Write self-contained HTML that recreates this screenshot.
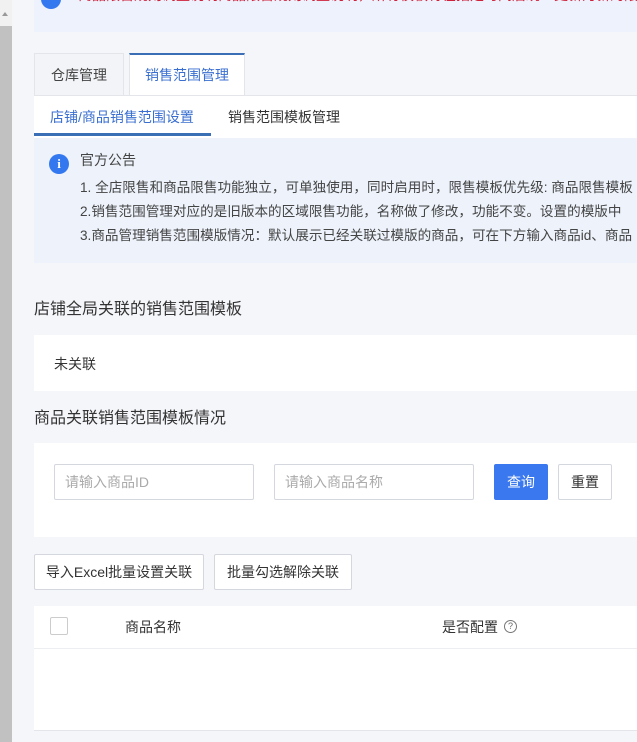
<!DOCTYPE html>
<html><head><meta charset="utf-8">
<style>
*{box-sizing:border-box;margin:0;padding:0}
body{width:637px;height:742px;overflow:hidden;background:#f5f6fa;font-family:"Liberation Sans","Noto Sans CJK SC",sans-serif;font-size:14px;color:#333;position:relative}
.abs{position:absolute}
.sb{left:0;top:0;width:12px;height:742px;background:#f1f1f1}
.sbt{left:0;top:26px;width:12px;height:716px;background:#c1c1c1}
.top{left:34px;top:0;width:603px;height:32px;background:#edf2fc;overflow:hidden}
.red{left:44px;top:-15px;white-space:nowrap;color:#d0203a;font-size:14px;line-height:20px}
.tab{top:53px;height:43px;line-height:42px;text-align:center;font-size:14px}
.line{left:34px;top:95px;width:603px;height:1px;background:#e3e5ea}
.notice{left:34px;top:138px;width:603px;height:125px;background:#edf2fb}
.ic{width:20px;height:20px;border-radius:50%;background:#3478f0;color:#fff;font-size:13px;font-weight:bold;text-align:center;line-height:20px;font-family:"Liberation Serif",serif}
.nt{left:80px;font-size:13.6px;color:#444;white-space:nowrap;line-height:20px}
.h{left:34px;font-size:16px;color:#333}
.box{left:34px;width:603px;background:#fff}
.inp{top:464px;width:200px;height:36px;border:1px solid #d4d7de;border-radius:2px;background:#fff;color:#aaa;padding-left:10px;line-height:34px;font-size:14px}
.btn{height:36px;border:1px solid #d4d7de;border-radius:2px;background:#fff;text-align:center;line-height:34px;font-size:14px;color:#333}
</style></head><body>
<div class="abs sb"></div><div class="abs sbt"></div>
<div class="abs" style="left:2px;top:12px;width:0;height:0;border-left:3px solid transparent;border-right:3px solid transparent;border-bottom:4px solid #999"></div>
<div class="abs top">
  <div class="abs ic" style="left:7px;top:-11px"></div>
  <div class="abs red">商品限售规则调整说明商品限售规则调整说明，所有模板将在指定时间后统一更新为新的限售模板规则说明商品限售</div>
</div>
<div class="abs tab" style="left:34px;width:90px;background:#f3f4f7;border:1px solid #e3e5ea;color:#444">仓库管理</div>
<div class="abs tab" style="left:129px;width:116px;background:#fff;border:1px solid #e3e5ea;border-top:2px solid #3a6fb5;border-bottom:none;color:#3a6fd0;height:44px;line-height:40px">销售范围管理</div>
<div class="abs line"></div>
<div class="abs" style="left:34px;top:96px;width:603px;height:42px;background:#fff"></div>
<div class="abs" style="left:50px;top:107px;color:#3a6fd0;font-size:14px">店铺/商品销售范围设置</div>
<div class="abs" style="left:228px;top:107px;color:#333;font-size:14px">销售范围模板管理</div>
<div class="abs" style="left:34px;top:133px;width:177px;height:3px;background:#3a6fb5"></div>
<div class="abs notice"></div>
<div class="abs ic" style="left:49px;top:154px">i</div>
<div class="abs nt" style="top:150px;font-size:14px">官方公告</div>
<div class="abs nt" style="top:178px">1. 全店限售和商品限售功能独立，可单独使用，同时启用时，限售模板优先级: 商品限售模板</div>
<div class="abs nt" style="top:202px">2.销售范围管理对应的是旧版本的区域限售功能，名称做了修改，功能不变。设置的模版中</div>
<div class="abs nt" style="top:226px">3.商品管理销售范围模版情况：默认展示已经关联过模版的商品，可在下方输入商品id、商品</div>
<div class="abs h" style="top:298px;margin-top:-3px">店铺全局关联的销售范围模板</div>
<div class="abs box" style="top:335px;height:56px"></div>
<div class="abs" style="left:54px;top:354px;font-size:14px">未关联</div>
<div class="abs h" style="top:404px">商品关联销售范围模板情况</div>
<div class="abs box" style="top:443px;height:94px"></div>
<div class="abs inp" style="left:54px">请输入商品ID</div>
<div class="abs inp" style="left:274px">请输入商品名称</div>
<div class="abs btn" style="left:494px;top:464px;width:54px;background:#3a78ef;border-color:#3a78ef;color:#fff">查询</div>
<div class="abs btn" style="left:558px;top:464px;width:54px">重置</div>
<div class="abs btn" style="left:34px;top:554px;width:170px">导入Excel批量设置关联</div>
<div class="abs btn" style="left:214px;top:554px;width:138px">批量勾选解除关联</div>
<div class="abs box" style="top:606px;height:125px"></div>
<div class="abs" style="left:34px;top:648px;width:603px;height:1px;background:#eceef2"></div>
<div class="abs" style="left:34px;top:730px;width:603px;height:1px;background:#e3e5ea"></div>
<div class="abs" style="left:50px;top:617px;width:18px;height:18px;border:1px solid #ccc;border-radius:2px;background:#fff"></div>
<div class="abs" style="left:125px;top:617px;font-size:14px">商品名称</div>
<div class="abs" style="left:442px;top:617px;font-size:14px">是否配置</div>
<div class="abs" style="left:504px;top:620px;width:13px;height:13px;border:1px solid #777;border-radius:50%;font-size:9px;line-height:11px;text-align:center;color:#666">?</div>
</body></html>
